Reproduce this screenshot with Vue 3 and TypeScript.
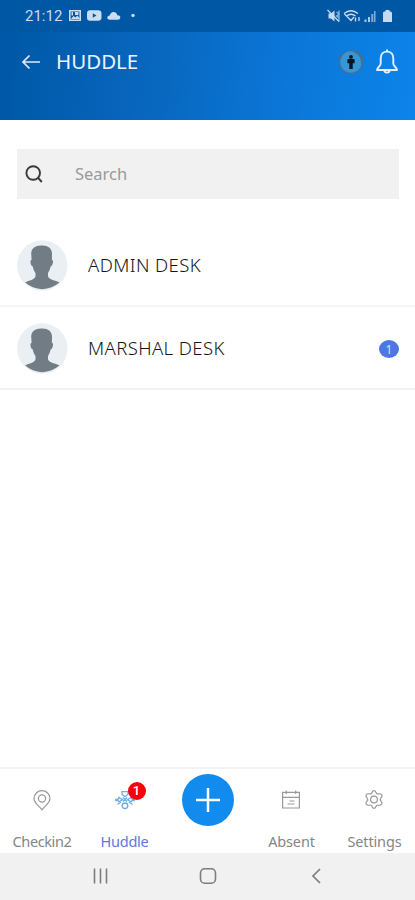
<script setup lang="ts">
interface Desk {
  name: string
  key: string
  unread: number
}

const desks: Desk[] = [
  { name: 'ADMIN DESK', key: 'admin', unread: 0 },
  { name: 'MARSHAL DESK', key: 'marshal', unread: 1 },
]
</script>

<template>
  <div class="screen">
    <header class="top">
      <div class="status">
        <span class="clock">21:12</span>
        <svg class="status-left" width="70" height="14" viewBox="0 0 70 14" fill="#c9def2">
          <path fill-rule="evenodd" d="M1 1h12v11H1zM2.600 2.600v7.800h8.800V2.600z" />
          <path d="M3.500 3h1.500v3.500H3.500zM7 3h3.500v3H7zM3 10l2.500-3 2 1.600L9.300 6.500l2 2.500v1z" />
          <path fill-rule="evenodd" d="M22 1.300h8q3.500 0 3.500 3v4.400q0 3-3.500 3h-8q-3 0-3-3V4.300q0-3 3-3zM24.800 4.200v4.600l3.700-2.300z" />
          <path d="M42 10.800q-3-.3-2.700-2.600.5-1.800 2.500-1.700.8-3.500 3.700-3.500 3 0 3.800 3.300 3-.1 3 2.400 0 2.100-2.700 2.100z" />
          <circle cx="65" cy="6.400" r="1.700" />
        </svg>
        <svg class="status-right" width="68" height="16" viewBox="0 0 68 16">
          <g fill="#c4dbf1">
            <path d="M1.500 5.500h2.500L7.500 2.500v11L4 10.500H1.500z" />
            <path d="M37.500 11.500h2V14h-2zM41 9h2v5h-2z" opacity=".85" />
            <path d="M44.300 6h2v8h-2zM47 3h1.500v11H47z" opacity=".65" />
            <path d="M58.500 2h4v1.500h1q1.500 0 1.500 1.500v9h-9V5q0-1.500 1.500-1.500h1z" />
          </g>
          <g fill="none" stroke="#c4dbf1" stroke-width="1.300">
            <path d="M.5 2l11.500 11.500" />
            <path d="M9.500 4l2.500 2-2.500 2 2.500 2M12 2.500v11" opacity=".7" />
            <path d="M17 5.500q7-5.500 14 0M19.500 8q4.500-3.500 9 0M17.500 6l6.500 6.500L27 9M28.500 9.500v4M32 9v4" />
          </g>
        </svg>
      </div>
      <div class="title-bar">
        <svg class="back" width="20" height="18" viewBox="0 0 20 18" fill="none" stroke="#dcecfb" stroke-width="1.700">
          <path d="M8.500 2.500L2 9l6.500 6.500M2 9h17" />
        </svg>
        <h1>HUDDLE</h1>
        <svg class="person" width="26" height="26" viewBox="0 0 26 26">
          <circle cx="13" cy="13" r="11.400" fill="#3697d8" stroke="#4a6c90" stroke-width="1.300" />
          <path d="M16 2.800a10.500 10.500 0 0 1 7.600 12" fill="none" stroke="#596b79" stroke-width="1.500" />
          <circle cx="13" cy="7.900" r="1.900" fill="#071521" />
          <path d="M10.200 10h5.600q.8 0 .8.800v3.400h-1.900V20h-3.400v-5.800H9.400v-3.400q0-.8.800-.8z" fill="#071521" />
        </svg>
        <svg class="bell" width="24" height="28" viewBox="0 0 24 28" fill="none" stroke="#e3f0fc" stroke-width="1.900" stroke-linejoin="round">
          <path d="M12 1.500v2M12 3.600c-3.800 0-6.300 2.800-6.300 6.800v5.400c0 2.100-3.700 3.900-3.700 6.200h20c0-2.300-3.700-4.100-3.700-6.200v-5.400c0-4-2.500-6.800-6.300-6.800zM9.300 22.200c.3 3.200 5.100 3.200 5.400 0" />
        </svg>
      </div>
    </header>

    <main>
      <label class="search">
        <svg width="20" height="20" viewBox="0 0 20 20" fill="none" stroke="#3a3a3a" stroke-width="1.900">
          <circle cx="8.200" cy="9" r="6.800" />
          <path d="M12.800 13.500l4 4.500" />
        </svg>
        <span>Search</span>
      </label>

      <ul class="desks">
        <li v-for="desk in desks" :key="desk.key" :class="desk.key">
          <svg class="avatar" width="51" height="51" viewBox="0 0 51 51">
            <circle cx="25.300" cy="25.500" r="25.200" fill="#e9eff2" />
            <path
              d="M24.500 5.500c6-.4 10.300 2.500 10.500 8l-.1 6.200c1.500.6 1.300 3 .5 4.800-.4 1.200-1 1.800-1.700 1.800-.6 3-1.500 5-2.700 6.700v3.500c1.300 3.300 7.200 4 11.500 5.800A25.200 25.200 0 0 1 8 42.300C12.300 40.500 17.500 39.800 18.500 36.500V33c-1.500-1.700-2.200-3.700-2.800-6.700-.8 0-1.400-.6-1.700-1.800-.8-2-.8-4.300.6-4.800l-.4-6.200c0-5.400 4.600-8.200 10.300-8z"
              fill="#727c84"
            />
          </svg>
          <span class="name">{{ desk.name }}</span>
          <span v-if="desk.unread" class="unread">{{ desk.unread }}</span>
        </li>
      </ul>
    </main>

    <nav class="tabs">
      <a class="tab checkin">
        <svg width="20" height="24" viewBox="0 0 20 24" fill="none" stroke="#999" stroke-width="1.200">
          <path d="M10 20.800C8 17.500 2 14.500 2 9.500a8 7.800 0 0 1 16 0C18 14.500 12 17.500 10 20.800z" />
          <circle cx="10" cy="9.500" r="3.600" />
        </svg>
        <span>Checkin2</span>
      </a>
      <a class="tab huddle">
        <div class="icon-wrap">
          <svg width="20" height="24" viewBox="0 0 20 24" fill="none" stroke="#6baee0" stroke-width="1.300">
            <circle cx="10" cy="16.800" r="2.800" />
            <path d="M7 2.700h6v2.500L10 7.700 7 5.200z" />
            <path d="M.8 10.300h2l1-1.800 3.700 2.200-3.700 2-1-1.200h-2zM19.200 10.300h-2l-1-1.800-3.700 2.200 3.700 2 1-1.200h2z" />
            <path d="M8 8.500l4 4M12 8.500l-4 4M6 13l-3.500 2.500M14 13l3.500 2.500" />
          </svg>
          <b>1</b>
        </div>
        <span>Huddle</span>
      </a>
      <a class="add">
        <svg width="52" height="52" viewBox="0 0 52 52">
          <circle cx="26" cy="26" r="26" fill="#118bee" />
          <path d="M26 14v24M14 26h24" stroke="#fff" stroke-width="2.500" />
        </svg>
      </a>
      <a class="tab absent">
        <svg width="20" height="24" viewBox="0 0 20 24" fill="none" stroke="#999" stroke-width="1.200">
          <path d="M1.600 3.300h16.800v15.700H1.600zM1.600 8.300h16.800M5.300 1.500v3.500M14.700 1.500v3.500M8.500 12h5M6.500 15h7" />
        </svg>
        <span>Absent</span>
      </a>
      <a class="tab settings">
        <svg width="20" height="24" viewBox="0 0 20 24" fill="none" stroke="#999" stroke-width="1.200" stroke-linejoin="round">
          <path d="M10 1.700c1.300 0 1.700.5 2.100 2.100.4 1 1.200 1.400 2.300 1.100 1.700-.4 2.400-.3 3.400.9.700 1.300.4 1.900-.8 3-.8.900-.8 2.500 0 3.400 1.200 1.100 1.500 1.700.8 3-1 1.200-1.700 1.300-3.400.9-1.100-.3-1.900.1-2.300 1.100-.4 1.600-.8 2.100-2.100 2.100s-1.700-.5-2.100-2.100c-.4-1-1.200-1.400-2.300-1.100-1.700.4-2.400.3-3.400-.9-.7-1.300-.4-1.900.8-3 .8-.9.800-2.500 0-3.400-1.200-1.100-1.500-1.700-.8-3 1-1.200 1.700-1.300 3.400-.9 1.100.3 1.900-.1 2.300-1.100.4-1.600.8-2.100 2.100-2.100z" />
          <circle cx="10" cy="10.500" r="3.400" />
        </svg>
        <span>Settings</span>
      </a>
    </nav>

    <footer class="system">
      <svg width="18" height="18" viewBox="0 0 18 18" stroke="#7d7d7d" stroke-width="1.600">
        <path d="M3 1.500v15M9 1.500v15M15 1.500v15" transform="translate(.5 -1)" />
      </svg>
      <svg width="18" height="18" viewBox="0 0 18 18" fill="none" stroke="#7d7d7d" stroke-width="1.600">
        <rect x="1.500" y=".8" width="15" height="14.500" rx="4.300" />
      </svg>
      <svg width="18" height="18" viewBox="0 0 18 18" fill="none" stroke="#7d7d7d" stroke-width="1.700">
        <path d="M13 1L6 8l7 7" />
      </svg>
    </footer>
  </div>
</template>

<style>
body {
  margin: 0;
}
</style>

<style scoped>
.screen {
  display: flex;
  flex-direction: column;
  height: 900px;
  background: #fff;
  font-family: 'Noto Sans', 'Open Sans', sans-serif;
}
svg {
  display: block;
  flex: none;
}
.top {
  height: 120px;
  background: linear-gradient(96deg, #0059a8 4%, #0867bf 38%, #0b77d8 70%, #0c84ea 100%);
}
.status {
  box-sizing: border-box;
  display: flex;
  align-items: center;
  height: 32px;
  padding: 0 20px 0 25px;
  background: #0057a4;
}
.clock {
  width: 43px;
  color: #c9def2;
  font: 15px/34px Roboto, sans-serif;
}
.status-right {
  margin-left: auto;
}
.title-bar {
  display: flex;
  align-items: center;
  height: 60px;
  padding: 0 16px 0 21px;
}
h1 {
  margin: -2px auto 0 15px;
  color: #eaf4fd;
  font-size: 20.500px;
  font-weight: 400;
  line-height: 28px;
  letter-spacing: 0;
}
.bell {
  margin-left: 11px;
}
main {
  flex: 1;
  padding-top: 29px;
}
.search {
  display: flex;
  align-items: center;
  height: 50px;
  margin: 0 16px 0 17px;
  padding-left: 8px;
  background: #f1f1f1;
}
.search span {
  margin-left: 30px;
  color: #9a9a9a;
  font-size: 16.500px;
  line-height: 24px;
}
.desks {
  margin: 25px 0 0;
  padding: 0;
  list-style: none;
}
.desks li {
  box-sizing: border-box;
  display: flex;
  align-items: center;
  height: 83px;
  padding: 2px 16px 0 17px;
  border-bottom: 2px solid #f2f2f2;
}
.desks .admin {
  border-color: #f6f6f6;
}
.name {
  margin: -2px 0 0 20px;
  color: #151515;
  font-size: 18.500px;
  font-weight: 300;
  letter-spacing: 0.400px;
}
.unread {
  width: 20px;
  height: 18px;
  margin-left: auto;
  border-radius: 50%;
  background: #4e77e4;
  color: #dce5ff;
  font-size: 12px;
  line-height: 20px;
  text-align: center;
}
.tabs {
  box-sizing: border-box;
  display: grid;
  grid-template-columns: repeat(5, 83px);
  height: 86px;
  border-top: 2px solid #f1f3f5;
}
.tab {
  display: flex;
  flex-direction: column;
  align-items: center;
  padding-top: 20px;
  color: #858585;
}
.tab span {
  margin-top: 17px;
  font-size: 14.500px;
  line-height: 22px;
  letter-spacing: -0.250px;
}
.tab.checkin span {
  margin-left: 1px;
  letter-spacing: -0.400px;
}
.tab.settings span,
.tab.absent span {
  margin-left: 2px;
  letter-spacing: -0.150px;
}
.tab.huddle {
  color: #5e78de;
}
.icon-wrap {
  position: relative;
}
.icon-wrap b {
  position: absolute;
  top: -7px;
  left: 13px;
  width: 18px;
  height: 18px;
  border-radius: 50%;
  background: #f5000b;
  color: #fff;
  font: 500 13px/18px Roboto, sans-serif;
  text-align: center;
}
.add {
  display: flex;
  justify-content: center;
  padding-top: 5px;
}
.system {
  display: flex;
  justify-content: center;
  align-items: center;
  gap: 90px;
  height: 47px;
  background: #f1f1f1;
}
</style>
